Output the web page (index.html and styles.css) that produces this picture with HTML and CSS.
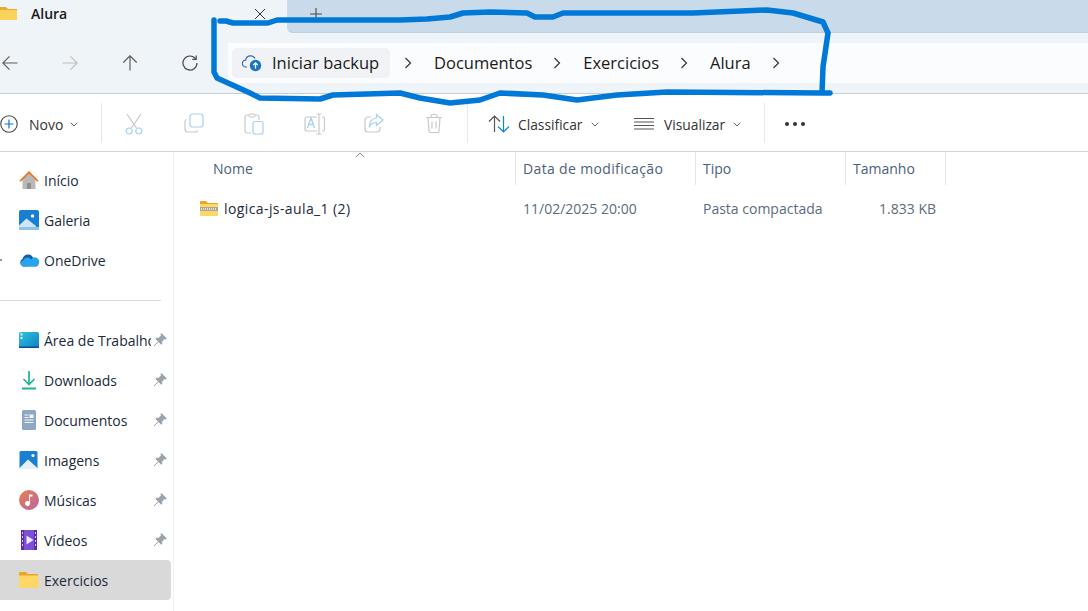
FILE: index.html
```html
<!DOCTYPE html>
<html lang="pt-BR">
<head>
    <meta charset="UTF-8">
    <meta name="viewport" content="width=device-width, initial-scale=1.0">
    <title>Alura - Explorador de Arquivos</title>
    <link rel="stylesheet" href="styles.css">
</head>
<body>

<div class="janela">
    <!-- Abas -->
    <div class="abas">
        <div class="aba">
            <svg class="aba-pasta" width="18" height="16" viewBox="0 0 18 16"><path d="M0 1h7l2 2h9v2H0z" fill="#f0a92b"/><path d="M0 4h18v10H0z" fill="#fbd35c"/></svg>
            <span class="aba-titulo">Alura</span>
            <svg class="aba-fechar" width="12" height="12" viewBox="0 0 12 12"><path d="M1 1l10 10M11 1L1 11" stroke="#333" stroke-width="1" fill="none"/></svg>
        </div>
        <div class="aba-resto">
            <svg class="aba-mais" width="12" height="12" viewBox="0 0 12 12"><path d="M6 0v12M0 6h12" stroke="#4a4a4a" stroke-width="1.1" fill="none"/></svg>
        </div>
    </div>

    <!-- Navegacao -->
    <div class="nav">
        <div class="nav-botoes">
            <button class="nav-botao"><svg width="16" height="16" viewBox="0 0 16 16"><path d="M15.500 8H.8M7.500 1.300L.8 8l6.700 6.700" stroke="#5f5f5f" stroke-width="1.200" fill="none"/></svg></button>
            <button class="nav-botao"><svg width="16" height="16" viewBox="0 0 16 16"><path d="M.5 8h14.700M8.500 1.300L15.200 8l-6.700 6.700" stroke="#bdbdbd" stroke-width="1.200" fill="none"/></svg></button>
            <button class="nav-botao"><svg width="16" height="16" viewBox="0 0 16 16"><path d="M8 15.500V.8M1.300 7.500L8 .8l6.700 6.700" stroke="#5f5f5f" stroke-width="1.200" fill="none"/></svg></button>
            <button class="nav-botao"><svg width="16" height="16" viewBox="0 0 16 16"><path d="M13.600 3.800A7 7 0 1 0 15 8" stroke="#4a4a4a" stroke-width="1.200" fill="none"/><path d="M14.200.6v3.800h-3.800" stroke="#4a4a4a" stroke-width="1.200" fill="none"/></svg></button>
        </div>
        <div class="endereco">
            <div class="backup">
                <svg width="20" height="18" viewBox="0 0 20 18"><path d="M5 13H4a3.400 3.400 0 0 1-.4-6.800A5 5 0 0 1 13 4.600" stroke="#2f6fb5" stroke-width="1.200" fill="none"/><circle cx="13.500" cy="11.500" r="5.700" fill="#1a73c4"/><path d="M13.500 14.500v-5.500M11.300 11l2.200-2.200 2.200 2.200" stroke="#fff" stroke-width="1.300" fill="none"/></svg>
                <span>Iniciar backup</span>
            </div>
            <svg class="seta" width="8" height="12" viewBox="0 0 8 12"><path d="M1.500 1l5 5-5 5" stroke="#333" stroke-width="1.200" fill="none"/></svg>
            <span class="migalha">Documentos</span>
            <svg class="seta" width="8" height="12" viewBox="0 0 8 12"><path d="M1.500 1l5 5-5 5" stroke="#333" stroke-width="1.200" fill="none"/></svg>
            <span class="migalha">Exercicios</span>
            <svg class="seta" width="8" height="12" viewBox="0 0 8 12"><path d="M1.500 1l5 5-5 5" stroke="#333" stroke-width="1.200" fill="none"/></svg>
            <span class="migalha">Alura</span>
            <svg class="seta" width="8" height="12" viewBox="0 0 8 12"><path d="M1.500 1l5 5-5 5" stroke="#333" stroke-width="1.200" fill="none"/></svg>
        </div>
    </div>

    <!-- Barra de ferramentas -->
    <div class="ferramentas">
        <div class="novo">
            <svg width="18" height="18" viewBox="0 0 18 18"><circle cx="9" cy="9" r="8.200" stroke="#444" stroke-width="1.100" fill="none"/><path d="M9 4.500v9M4.500 9h9" stroke="#0a74cf" stroke-width="1.200"/></svg>
            <span>Novo</span>
            <svg class="chevron" width="8" height="5" viewBox="0 0 8 5"><path d="M.7.7L4 4l3.300-3.300" stroke="#666" fill="none"/></svg>
        </div>
        <div class="sep"></div>
        <div class="acoes">
            <div class="acao"><svg width="20" height="22" viewBox="0 0 20 22"><path d="M3 1l9.500 14M17 1L7.500 15" stroke="#c4c4c4" stroke-width="1.100" fill="none"/><circle cx="5.200" cy="18" r="3" stroke="#a9d0f1" stroke-width="1.200" fill="none"/><circle cx="14.800" cy="18" r="3" stroke="#a9d0f1" stroke-width="1.200" fill="none"/></svg></div>
            <div class="acao"><svg width="20" height="20" viewBox="0 0 20 20"><path d="M2.500 6.500A2 2 0 0 0 1 8.500v7.500a3 3 0 0 0 3 3h7.500a2 2 0 0 0 2-1.500" stroke="#c9c9c9" stroke-width="1.200" fill="none"/><rect x="6" y="1" width="13" height="13" rx="2.500" stroke="#a9d0f1" stroke-width="1.200" fill="none"/></svg></div>
            <div class="acao"><svg width="20" height="22" viewBox="0 0 20 22"><path d="M7 20H3a2 2 0 0 1-2-2V4a2 2 0 0 1 2-2h10a2 2 0 0 1 2 2v3" stroke="#c9c9c9" stroke-width="1.200" fill="none"/><rect x="5" y="1" width="6" height="3" rx="1" fill="#fff" stroke="#c9c9c9"/><rect x="9" y="8.500" width="10" height="12.500" rx="2" stroke="#a9d0f1" stroke-width="1.200" fill="none"/></svg></div>
            <div class="acao"><svg width="21" height="22" viewBox="0 0 21 22"><path d="M13 4H3a2 2 0 0 0-2 2v10a2 2 0 0 0 2 2h10" stroke="#c9c9c9" stroke-width="1.200" fill="none"/><path d="M15 1v20M12.500 1h5M12.500 21h5M18 4h1a1.500 1.500 0 0 1 1.500 1.500v11A1.500 1.500 0 0 1 19 18h-1" stroke="#c9c9c9" stroke-width="1.200" fill="none"/><path d="M3.500 15l3.500-10 3.500 10M4.700 11.500h4.600" stroke="#a9d0f1" stroke-width="1.300" fill="none"/></svg></div>
            <div class="acao"><svg width="20" height="20" viewBox="0 0 20 20"><path d="M7 4H4a3 3 0 0 0-3 3v9a3 3 0 0 0 3 3h9a3 3 0 0 0 3-3v-2" stroke="#c9c9c9" stroke-width="1.200" fill="none"/><path d="M12.500 1.500L19 7l-6.500 5.500V9.500c-3.500 0-5.500 1.500-7 4 0-5 3-8 7-8.500z" stroke="#a9d0f1" stroke-width="1.200" fill="none"/></svg></div>
            <div class="acao"><svg width="18" height="21" viewBox="0 0 18 20"><path d="M1 4h16M6 4V2.500A1.500 1.500 0 0 1 7.500 1h3A1.500 1.500 0 0 1 12 2.500V4M3 4l1 13.500A1.500 1.500 0 0 0 5.500 19h7a1.500 1.500 0 0 0 1.500-1.500L15 4M7 8v7M11 8v7" stroke="#c9c9c9" stroke-width="1.200" fill="none"/></svg></div>
        </div>
        <div class="sep"></div>
        <div class="menu menu-classificar">
            <svg width="22" height="18" viewBox="0 0 22 18"><path d="M6.500 17V1M1 6.500L6.500 1 12 6.500" stroke="#555" stroke-width="1.200" fill="none"/><path d="M15.500 1v16M10 11.500l5.500 5.500 5.500-5.500" stroke="#0a84e0" stroke-width="1.200" fill="none"/></svg>
            <span>Classificar</span>
            <svg class="chevron" width="8" height="5" viewBox="0 0 8 5"><path d="M.7.7L4 4l3.300-3.300" stroke="#666" fill="none"/></svg>
        </div>
        <div class="menu menu-visualizar">
            <svg width="20" height="12" viewBox="0 0 20 12"><path d="M0 .5h20M0 4h20M0 7.500h20M0 11h20" stroke="#555" stroke-width="1"/></svg>
            <span>Visualizar</span>
            <svg class="chevron" width="8" height="5" viewBox="0 0 8 5"><path d="M.7.7L4 4l3.300-3.300" stroke="#666" fill="none"/></svg>
        </div>
        <div class="sep sep-fim"></div>
        <div class="mais"><i></i><i></i><i></i></div>
    </div>

    <div class="corpo">
        <!-- Painel lateral -->
        <aside class="lateral">
            <div class="item">
                <svg width="20" height="20" viewBox="0 0 20 20"><path d="M3.500 9v10h13V9L10 3z" fill="#b9b9b9"/><path d="M8 19v-6h4v6z" fill="#8f8f8f"/><path d="M.5 10.500L10 1l9.500 9.500-1.200 1.200L10 3.500 1.700 11.700z" fill="#e8761e"/></svg>
                <span>Início</span>
            </div>
            <div class="item">
                <svg width="20" height="20" viewBox="0 0 20 20"><rect width="20" height="20" rx="2" fill="#1a7fd0"/><circle cx="13.500" cy="6" r="1.700" fill="#fff"/><path d="M0 15.500L7.500 8.500 17 16v1H0z" fill="#cfe6f8"/><path d="M0 17h20v3H0z" fill="#8cc4ee"/></svg>
                <span>Galeria</span>
            </div>
            <div class="item item-expande">
                <svg width="20" height="14" viewBox="0 0 20 14"><path d="M4.200 13.500A4 4 0 0 1 3.500 6 5.800 5.800 0 0 1 14.200 4.500l-3 8.500z" fill="#0f5fb0"/><path d="M4.500 13.800a3.200 3.200 0 0 1-.3-6.300 4.500 4.500 0 0 1 8-1 4.200 4.200 0 0 1 7.500 4.300 3.500 3.500 0 0 1-2.500 3z" fill="#29a3ea"/></svg>
                <span>OneDrive</span>
            </div>
            <div class="divisor"></div>
            <div class="item">
                <svg width="20" height="16" viewBox="0 0 20 16"><defs><linearGradient id="tela" x1="0" y1="0" x2="1" y2="1"><stop offset="0" stop-color="#2fc4dc"/><stop offset="1" stop-color="#0f7fc4"/></linearGradient></defs><rect width="20" height="16" rx="1.500" fill="url(#tela)"/><path d="M0 14.500h20V16H0z" fill="#0b4f8c"/><rect x="1.500" y="1.500" width="2" height="2" fill="#d7f4fb"/><rect x="1.500" y="5" width="2" height="2" fill="#d7f4fb"/></svg>
                <span class="item-texto">Área de Trabalho</span>
                <svg class="pino" width="14" height="14" viewBox="0 0 14 14"><path d="M8.500.5l5 5-1.200.6-.8-.4L8.800 8.400c.4 1.200.2 2.300-.5 3L5.600 8.700 1 13l4.300-4.600L2.600 5.700c.7-.7 1.800-.9 3-.5l2.700-2.700-.4-.8z"/></svg>
            </div>
            <div class="item">
                <svg width="20" height="20" viewBox="0 0 20 20"><path d="M10 1v13M4.500 9l5.500 5.500L15.500 9" stroke="#1fb58f" stroke-width="1.700" fill="none"/><path d="M3 18.500h14" stroke="#1fb58f" stroke-width="2"/></svg>
                <span>Downloads</span>
                <svg class="pino" width="14" height="14" viewBox="0 0 14 14"><path d="M8.500.5l5 5-1.200.6-.8-.4L8.800 8.400c.4 1.200.2 2.300-.5 3L5.600 8.700 1 13l4.300-4.600L2.600 5.700c.7-.7 1.800-.9 3-.5l2.700-2.700-.4-.8z"/></svg>
            </div>
            <div class="item">
                <svg width="20" height="20" viewBox="0 0 20 20"><rect x="3" width="14" height="20" rx="1.500" fill="#8ea7c4"/><path d="M5.500 4.500h4v1h-4zM5.500 7h4v1h-4zM5.500 9.500h9v1h-9zM5.500 12h9v1h-9zM10.500 4.500h4v3.500h-4z" fill="#f1f5f9"/></svg>
                <span>Documentos</span>
                <svg class="pino" width="14" height="14" viewBox="0 0 14 14"><path d="M8.500.5l5 5-1.200.6-.8-.4L8.800 8.400c.4 1.200.2 2.300-.5 3L5.600 8.700 1 13l4.300-4.600L2.600 5.700c.7-.7 1.800-.9 3-.5l2.700-2.700-.4-.8z"/></svg>
            </div>
            <div class="item">
                <svg width="20" height="20" viewBox="0 0 20 20"><rect x=".5" y="1" width="18" height="18" rx="1.500" fill="#1a7fd0"/><circle cx="14" cy="5.500" r="1.600" fill="#fff"/><path d="M.5 18L9 9.500 18.500 18v1H.5z" fill="#e4f1fb"/></svg>
                <span>Imagens</span>
                <svg class="pino" width="14" height="14" viewBox="0 0 14 14"><path d="M8.500.5l5 5-1.200.6-.8-.4L8.800 8.400c.4 1.200.2 2.300-.5 3L5.600 8.700 1 13l4.300-4.600L2.600 5.700c.7-.7 1.800-.9 3-.5l2.700-2.700-.4-.8z"/></svg>
            </div>
            <div class="item">
                <svg width="20" height="20" viewBox="0 0 20 20"><defs><linearGradient id="musica" x1="0" y1="0" x2="1" y2="1"><stop offset="0" stop-color="#ea7f4a"/><stop offset="1" stop-color="#b866a8"/></linearGradient></defs><circle cx="10" cy="10" r="10" fill="url(#musica)"/><path d="M10 4.500h3.500v2H11v7a2.500 2.500 0 1 1-1-2z" fill="#fff"/></svg>
                <span>Músicas</span>
                <svg class="pino" width="14" height="14" viewBox="0 0 14 14"><path d="M8.500.5l5 5-1.200.6-.8-.4L8.800 8.400c.4 1.200.2 2.300-.5 3L5.600 8.700 1 13l4.300-4.600L2.600 5.700c.7-.7 1.800-.9 3-.5l2.700-2.700-.4-.8z"/></svg>
            </div>
            <div class="item">
                <svg width="20" height="20" viewBox="0 0 20 20"><rect x="2" width="16" height="20" rx="1.500" fill="#7b4fd6"/><path d="M2 0h3v20H2zM15 0h3v20h-3z" fill="#5a2fa8"/><path d="M3 2h1v2H3zM3 6h1v2H3zM3 10h1v2H3zM3 14h1v2H3zM16 2h1v2h-1zM16 6h1v2h-1zM16 10h1v2h-1zM16 14h1v2h-1z" fill="#d5c5f5"/><path d="M7.500 5.500l7 4.500-7 4.500z" fill="#efe8fc"/></svg>
                <span>Vídeos</span>
                <svg class="pino" width="14" height="14" viewBox="0 0 14 14"><path d="M8.500.5l5 5-1.200.6-.8-.4L8.800 8.400c.4 1.200.2 2.300-.5 3L5.600 8.700 1 13l4.300-4.600L2.600 5.700c.7-.7 1.800-.9 3-.5l2.700-2.700-.4-.8z"/></svg>
            </div>
            <div class="item ativo">
                <svg width="20" height="16" viewBox="0 0 20 16"><path d="M0 1a1 1 0 0 1 1-1h6l2 2h10v3H0z" fill="#eda425"/><path d="M0 3.500h18.500a1 1 0 0 1 1 1V15a1 1 0 0 1-1 1H1a1 1 0 0 1-1-1z" fill="#fcd766"/></svg>
                <span>Exercicios</span>
            </div>
        </aside>

        <!-- Lista de arquivos -->
        <main class="lista">
            <div class="colunas">
                <div class="col col-nome">Nome</div>
                <div class="col col-data">Data de modificação</div>
                <div class="col col-tipo">Tipo</div>
                <div class="col col-tamanho">Tamanho</div>
                <svg class="ordem" width="10" height="6" viewBox="0 0 10 6"><path d="M.8 5L5 1l4.200 4" stroke="#8a8a8a" fill="none"/></svg>
            </div>
            <div class="linha">
                <div class="cel cel-nome">
                    <svg width="18" height="15" viewBox="0 0 18 15"><path d="M0 1a1 1 0 0 1 1-1h5l2 2h10v2H0z" fill="#eda425"/><path d="M0 3h18v11a1 1 0 0 1-1 1H1a1 1 0 0 1-1-1z" fill="#fcd766"/><path d="M0 6h18v4H0z" fill="#a8a898"/><path d="M1 8h16" stroke-dasharray="1 1" stroke="#f2f2ea" stroke-width="1.500"/></svg>
                    <span>logica-js-aula_1 (2)</span>
                </div>
                <div class="cel cel-data">11/02/2025 20:00</div>
                <div class="cel cel-tipo">Pasta compactada</div>
                <div class="cel cel-tamanho">1.833 KB</div>
            </div>
        </main>
    </div>

    <!-- Rabisco azul por cima da barra de endereco -->
    <svg class="rabisco" width="1088" height="110" viewBox="0 0 1088 110">
        <path d="M220 21L226 21 233 23 268 23 277 20 330 20 400 20 427 19 450 17 463 13 490 12 527 13 535 17 553 17 563 13 693 13 717 12 767 10 793 13 823 22 828 33 823 67 822 93 830 93 822 93 667 92 617 95 577 100 543 95 500 93 480 100 450 103 420 98 400 93 333 95 320 99 260 98 250 93 217 78 214 72 214 20" fill="none" stroke="#0078d7" stroke-width="5.500" stroke-linecap="round" stroke-linejoin="round"/>
    </svg>
</div>

</body>
</html>
```

FILE: styles.css
```css
* {
    box-sizing: border-box;
}
html, body {
    margin: 0;
    padding: 0;
    height: 100%;
    overflow: hidden;
}
body {
    font-family: 'Open Sans', 'Noto Sans', sans-serif;
    font-size: 14px;
    color: #1a1a1a;
    background-color: white;
}
svg {
    flex-shrink: 0;
    display: block;
}
.janela {
    position: relative;
    height: 611px;
    display: flex;
    flex-direction: column;
    overflow: hidden;
}

/* Abas */
.abas {
    display: flex;
    height: 33px;
    background-color: #eff4f9;
}
.aba {
    width: 287px;
    display: flex;
    align-items: center;
    padding-bottom: 6px;
}
.aba-pasta {
    margin-left: -1px;
}
.aba-titulo {
    margin-left: 14px;
    font-weight: 600;
    flex-grow: 1;
}
.aba-fechar {
    margin-right: 21px;
}
.aba-resto {
    flex-grow: 1;
    background-color: #c9dbea;
    border-bottom-left-radius: 6px;
    border-bottom: 1px solid #bdd0e0;
    padding: 8px 0 0 23px;
}

/* Navegacao */
.nav {
    height: 61px;
    display: flex;
    align-items: center;
    background-color: #eff4f9;
    border-bottom: 1px solid #c4ced8;
    padding-bottom: 1px;
}
.nav-botoes {
    display: flex;
    margin-left: -20px;
    width: 248px;
}
.nav-botao {
    width: 60px;
    height: 40px;
    background: none;
    border: none;
    padding: 0;
    display: flex;
    align-items: center;
    justify-content: center;
}
.endereco {
    flex-grow: 1;
    height: 40px;
    background-color: #fafcfe;
    display: flex;
    align-items: center;
    padding-left: 4px;
    font-size: 16.5px;
}
.backup {
    width: 158px;
    height: 30px;
    display: flex;
    align-items: center;
    gap: 10px;
    padding-left: 10px;
    background-color: #f0f2f5;
    border-radius: 5px;
}
.seta {
    margin: 0 22px 0 14px;
}
.migalha + .seta {
    margin-left: 21px;
}

/* Ferramentas */
.ferramentas {
    height: 58px;
    display: flex;
    align-items: center;
    border-bottom: 1px solid #c9d5e0;
    padding-top: 3px;
    color: #333;
}
.ferramentas .sep {
    margin-top: -3px;
}
.novo {
    width: 101px;
    display: flex;
    align-items: center;
}
.novo span {
    margin: 0 7px 0 11px;
}
.sep {
    width: 1px;
    height: 40px;
    background-color: #e8e8e8;
}
.acoes {
    display: flex;
    width: 365px;
    padding-left: 2px;
}
.acao {
    width: 60px;
    display: flex;
    justify-content: center;
}
.menu {
    display: flex;
    align-items: center;
    font-size: 13.8px;
}
.menu span {
    margin: 0 8px;
}
.menu-classificar {
    margin-left: 20px;
    width: 146px;
}
.menu-visualizar {
    width: 130px;
}
.menu-visualizar span {
    margin-left: 10px;
}
.sep-fim {
    margin-right: 20px;
}
.mais {
    display: flex;
    gap: 4px;
}
.mais i {
    width: 4px;
    height: 4px;
    border-radius: 50%;
    background-color: #333;
}

/* Corpo */
.corpo {
    flex-grow: 1;
    display: flex;
    min-height: 0;
}
.lateral {
    width: 174px;
    border-right: 1px solid #f0f0f0;
    padding: 8px 2px 0 0;
    color: #1a2a3a;
}
.item {
    height: 40px;
    display: flex;
    align-items: center;
    padding-left: 19px;
    position: relative;
}
.item span {
    margin-left: 5px;
}
.item-expande::before {
    content: "";
    position: absolute;
    left: 0;
    top: 19px;
    width: 2px;
    height: 2px;
    background-color: #999;
}
.item-texto {
    width: 107px;
    overflow: hidden;
    white-space: nowrap;
}
.pino {
    position: absolute;
    left: 153px;
    top: 13px;
}
.pino path {
    fill: #9aa3ab;
    stroke: #9aa3ab;
    stroke-width: 0.7;
}
.ativo {
    background-color: #d9d9d9;
    border-radius: 0 4px 4px 0;
}
.divisor {
    height: 1px;
    margin: 20px 10px 19px 0;
    background-color: #d9d9d9;
}

/* Lista */
.lista {
    flex-grow: 1;
    color: #4c607a;
}
.colunas {
    position: relative;
    display: flex;
    height: 33px;
    align-items: center;
}
.col {
    height: 100%;
    display: flex;
    align-items: center;
    padding-left: 7px;
    border-right: 1px solid #e5e5e5;
}
.col-nome {
    width: 342px;
    padding-left: 39px;
}
.col-data {
    width: 180px;
    letter-spacing: 0.35px;
}
.col-tipo {
    width: 150px;
}
.col-tamanho {
    width: 100px;
}
.ordem {
    position: absolute;
    left: 181px;
    top: 0;
}
.linha {
    display: flex;
    align-items: center;
    height: 30px;
    margin-top: 8px;
    color: #5d6b7c;
}
.cel {
    padding-left: 7px;
}
.cel-nome {
    width: 342px;
    padding-left: 26px;
    display: flex;
    align-items: center;
    gap: 6px;
    color: #1a2a3a;
    letter-spacing: 0.4px;
}
.cel-data {
    width: 180px;
}
.cel-tipo {
    width: 150px;
}
.cel-tamanho {
    width: 90px;
    text-align: right;
    padding-left: 0;
}

/* Rabisco */
.rabisco {
    position: absolute;
    left: 0;
    top: 0;
    pointer-events: none;
}
```
